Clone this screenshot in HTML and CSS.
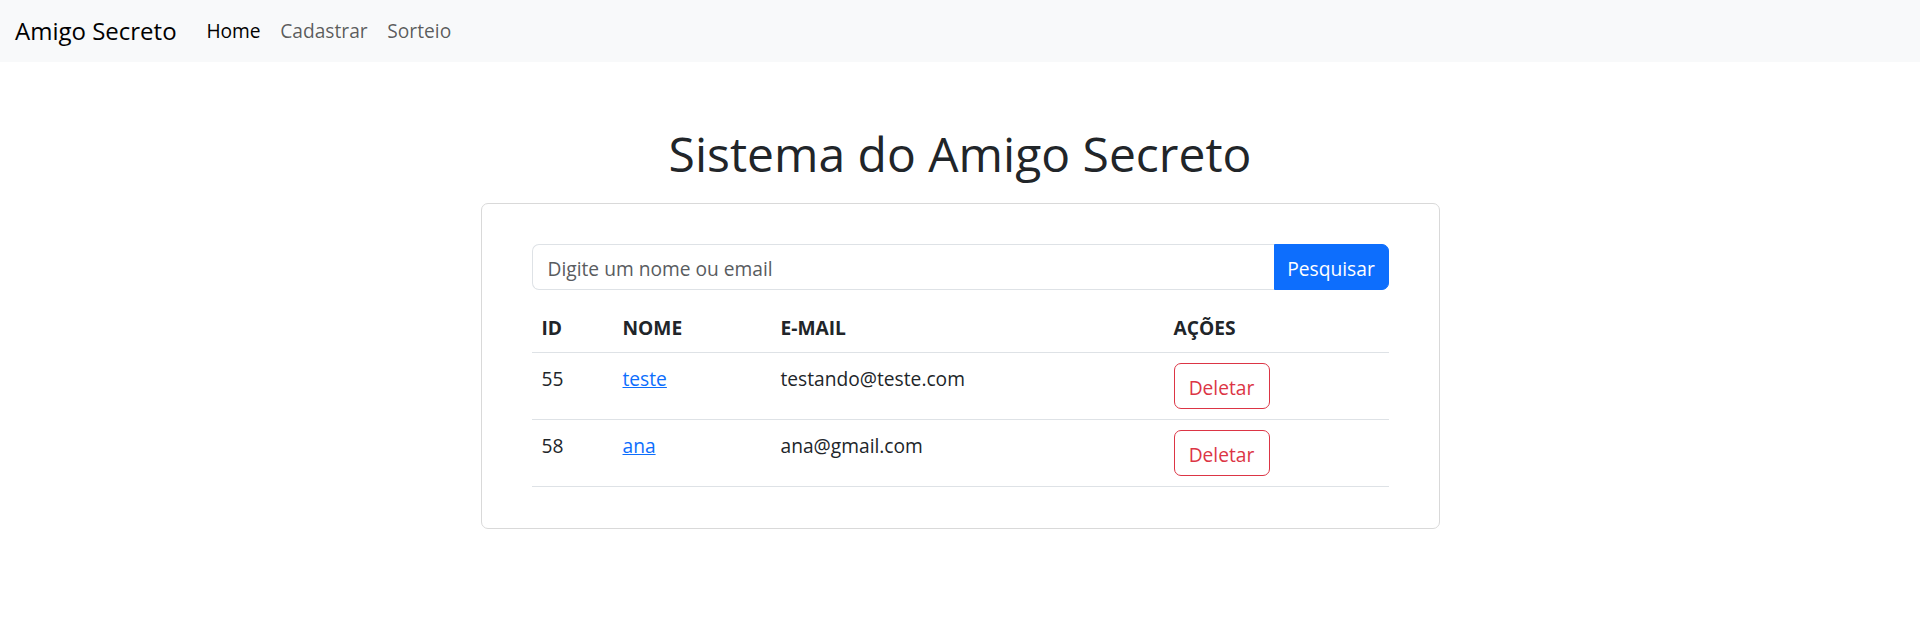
FILE: index.html
```html
<!DOCTYPE html>
<html lang="pt-BR">
<head>
<meta charset="utf-8">
<title>Amigo Secreto</title>
<link rel="stylesheet" href="styles.css">
</head>
<body>
<nav class="navbar">
  <a class="brand" href="#">Amigo Secreto</a>
  <ul class="nav">
    <li><a class="nav-link active" href="#">Home</a></li>
    <li><a class="nav-link" href="#">Cadastrar</a></li>
    <li><a class="nav-link" href="#">Sorteio</a></li>
  </ul>
</nav>
<main class="main">
  <h1 class="title">Sistema do Amigo Secreto</h1>
  <section class="card">
    <form class="search">
      <input class="search-input" type="text" placeholder="Digite um nome ou email">
      <button class="search-btn" type="button">Pesquisar</button>
    </form>
    <table class="table">
      <colgroup>
        <col class="c-id"><col class="c-nome"><col class="c-email"><col class="c-acoes">
      </colgroup>
      <thead>
        <tr><th>ID</th><th>NOME</th><th>E-MAIL</th><th>AÇÕES</th></tr>
      </thead>
      <tbody>
        <tr>
          <td>55</td>
          <td><a class="link" href="#">teste</a></td>
          <td>testando@teste.com</td>
          <td class="act"><button class="btn-del" type="button">Deletar</button></td>
        </tr>
        <tr>
          <td>58</td>
          <td><a class="link" href="#">ana</a></td>
          <td>ana@gmail.com</td>
          <td class="act"><button class="btn-del" type="button">Deletar</button></td>
        </tr>
      </tbody>
    </table>
  </section>
</main>
</body>
</html>
```

FILE: styles.css
```css
* { box-sizing: border-box; }
html, body { margin: 0; padding: 0; }
body {
  font-family: "Open Sans", "Noto Sans", sans-serif;
  font-size: 19.2px;
  line-height: 1.5;
  color: #212529;
  background: #fff;
}
.navbar {
  height: 62px;
  background: #f8f9fa;
  display: flex;
  align-items: center;
  padding: 0 15px;
}
.brand {
  font-size: 24px;
  line-height: 1.5;
  color: #000;
  text-decoration: none;
  margin-right: 20px;
}
.nav {
  list-style: none;
  display: flex;
  margin: 0;
  padding: 0;
}
.nav-link {
  display: block;
  padding: 0 9.8px;
  color: rgba(0, 0, 0, 0.65);
  text-decoration: none;
  line-height: 28.8px;
}
.nav-link.active { color: #000; }
.main {
  display: flex;
  flex-direction: column;
  align-items: center;
}
.title {
  font-size: 48px;
  font-weight: 400;
  line-height: 1.2;
  margin: 63px 0 20px;
}
.card {
  width: 959px;
  border: 1px solid #d9d9d9;
  border-radius: 7px;
  padding: 40px 50px 41px;
}
.search {
  display: flex;
  height: 46px;
  margin: 0 0 14px;
}
.search-input {
  flex: 1;
  min-width: 0;
  font: inherit;
  color: #212529;
  border: 1px solid #dee2e6;
  border-right: 0;
  border-radius: 7px 0 0 7px;
  padding: 5px 15px 0;
  outline: none;
}
.search-input::placeholder { color: #595c5f; }
.search-btn {
  width: 115px;
  font: inherit;
  color: #fff;
  background: #0d6efd;
  border: 1px solid #0d6efd;
  border-radius: 0 7px 7px 0;
  padding: 5px 0 0;
}
.table {
  width: 100%;
  border-collapse: collapse;
  table-layout: fixed;
}
.c-id { width: 81px; }
.c-nome { width: 158px; }
.c-email { width: 393px; }
.table th {
  text-align: left;
  font-weight: 700;
  padding: 10px 10px 9.2px;
  line-height: 28.8px;
  border-bottom: 1px solid #dee2e6;
}
.table td {
  vertical-align: top;
  padding: 12px 10px 8px;
  line-height: 28.8px;
  border-bottom: 1px solid #dee2e6;
}
.table td.act { padding: 10px 10px 10px; }
.link { color: #0d6efd; text-decoration: underline; }
.btn-del {
  display: block;
  width: 96px;
  height: 46px;
  font: inherit;
  color: #dc3545;
  background: #fff;
  border: 1px solid #dc3545;
  border-radius: 7px;
  padding: 5px 0 0;
}
```
